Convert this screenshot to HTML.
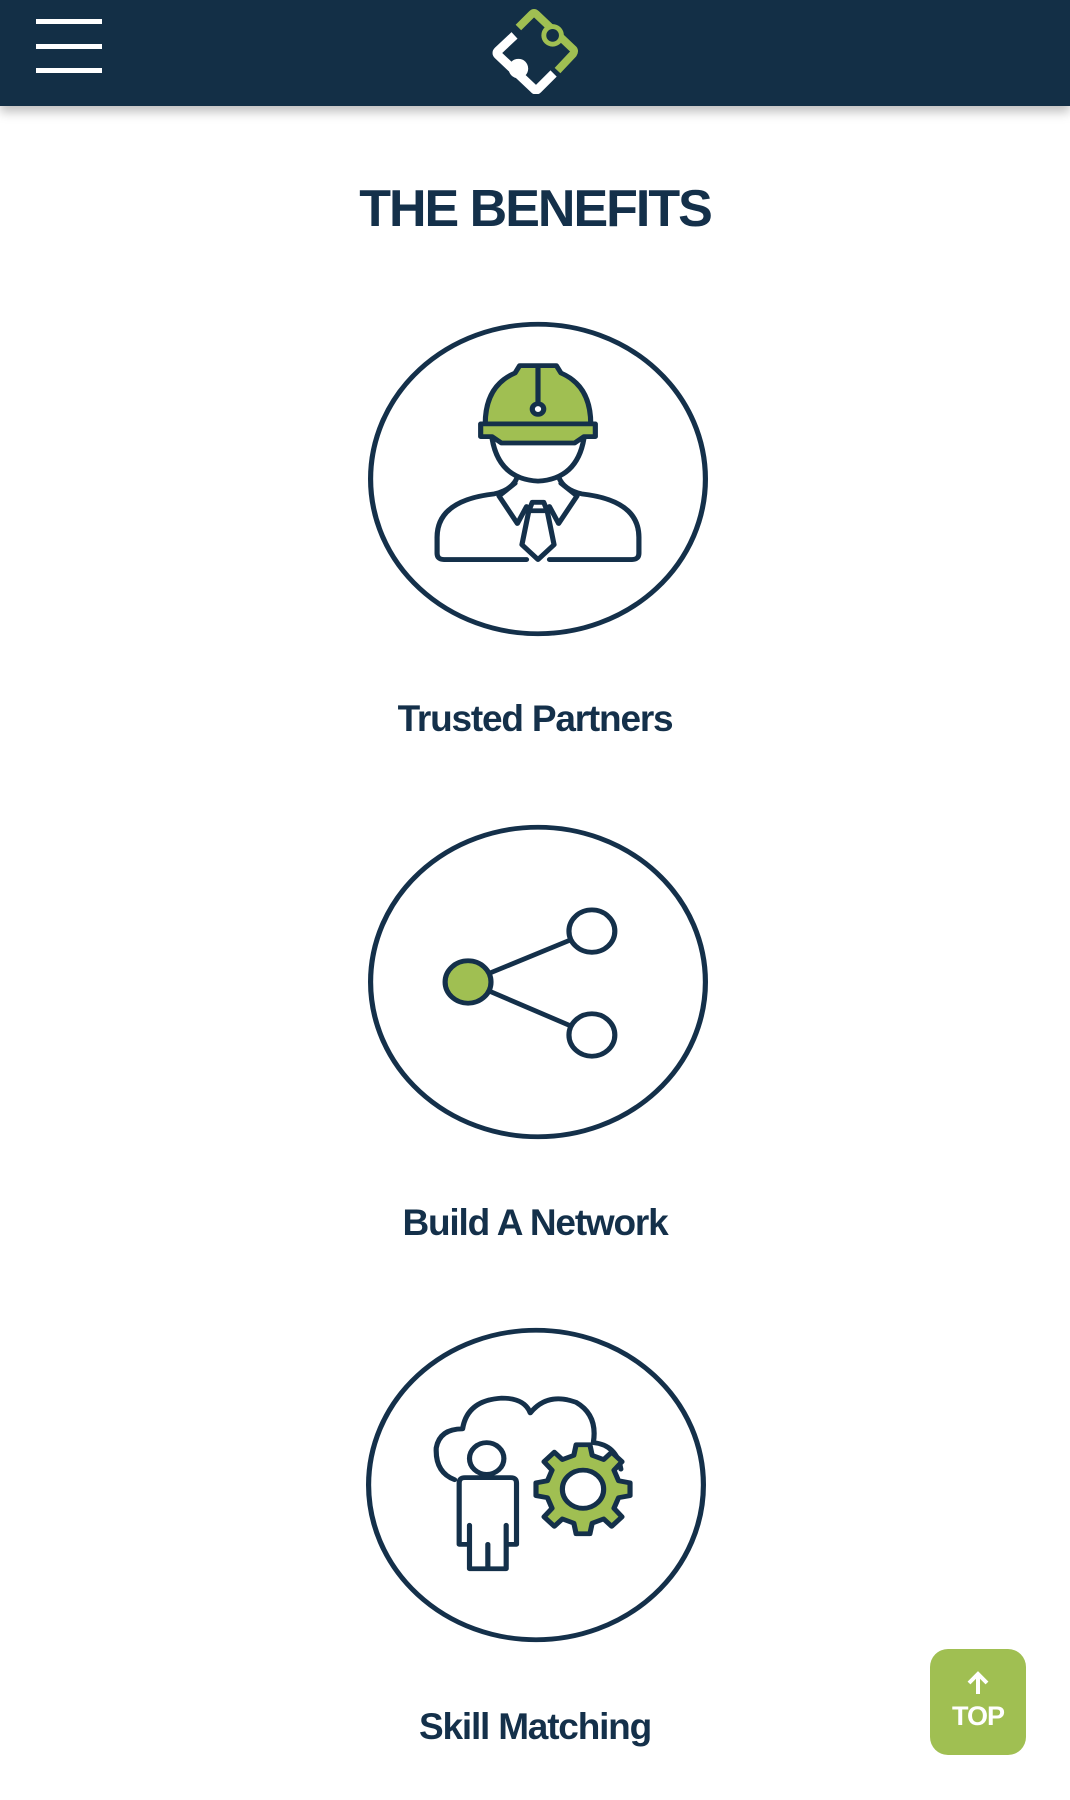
<!DOCTYPE html>
<html><head><meta charset="utf-8"><style>
html,body{margin:0;padding:0;background:#fff;width:1070px;height:1800px;overflow:hidden;font-family:"Liberation Sans",sans-serif;color:#14304a}
.hdr{position:absolute;left:0;top:0;width:1070px;height:106px;background:#132f46;box-shadow:0 6px 10px rgba(0,0,0,.25)}
.hb{position:absolute;left:36px;width:66px;height:5px;background:#fff}
h1{position:absolute;top:176px;left:0;width:1070px;text-align:center;margin:0;font-size:52px;font-weight:bold;letter-spacing:-2px;line-height:66px}
.lbl{position:absolute;left:0;width:1070px;text-align:center;font-size:37px;font-weight:bold;letter-spacing:-1.2px;line-height:46px}
.ic{position:absolute;width:344px;height:318px}
.top{position:absolute;left:930px;top:1649px;width:96px;height:106px;background:#a0bf52;border-radius:18px;color:#fff;text-align:center}
</style></head><body>
<div class="hdr">
<div class="hb" style="top:19px"></div><div class="hb" style="top:44px"></div><div class="hb" style="top:68px"></div>
<svg style="position:absolute;left:490px;top:8px" width="92" height="86" viewBox="0 0 92 88">
<path d="M28 20 L42 6 Q44 4 46 6 L84 42 Q86 44 84 47 L68 64" fill="none" stroke="#a0bf52" stroke-width="8" stroke-linejoin="round"/>
<circle cx="63" cy="28" r="9" fill="#132f46" stroke="#a0bf52" stroke-width="5"/>
<path d="M24 28 L7 44 Q5 46 7 48 L44 83 Q46 85 48 83 L64 67" fill="none" stroke="#fff" stroke-width="9" stroke-linejoin="round"/>
<circle cx="28" cy="62" r="10" fill="#fff"/>
</svg>
</div>
<h1>THE BENEFITS</h1>

<svg class="ic" style="left:366px;top:320px" viewBox="0 0 300 300" preserveAspectRatio="none">
<g fill="none" stroke="#14304a" stroke-width="4.5" stroke-linejoin="round" stroke-linecap="round">
<circle cx="150" cy="150" r="146"/>
<path d="M104 98 Q104 62 130 50 L134 43 H166 L170 50 Q196 62 196 98 Z" fill="#a0bf52"/>
<path d="M100 98 H200 V110 H190 L182 116 H118 L110 110 H100 Z" fill="#a0bf52"/>
<path d="M150 44 V80"/><circle cx="150" cy="84" r="5" fill="#fff"/>
<path d="M110 112 Q116 150 150 152 Q184 150 190 112"/>
<path d="M132 148 Q128 160 112 164 Q62 170 62 205 V220 Q62 226 68 226 H140"/>
<path d="M168 148 Q172 160 188 164 Q238 170 238 205 V220 Q238 226 232 226 H160"/>
<path d="M130 154 L116 166 L132 192 L140 176 M170 154 L184 166 L168 192 L160 176"/>
<path d="M145 172 H155 L158 180 L164 212 L150 226 L136 212 L142 180 Z M142 180 H158"/>
</g></svg>
<div class="lbl" style="top:696px">Trusted Partners</div>

<svg class="ic" style="left:366px;top:823px" viewBox="0 0 300 300" preserveAspectRatio="none">
<g fill="none" stroke="#14304a" stroke-width="4.5">
<circle cx="150" cy="150" r="146"/>
<path d="M89 150 L197 102 M89 150 L197 200"/>
<circle cx="89" cy="150" r="20" fill="#a0bf52"/>
<circle cx="197" cy="102" r="20" fill="#fff"/>
<circle cx="197" cy="200" r="20" fill="#fff"/>
</g></svg>
<div class="lbl" style="top:1200px">Build A Network</div>

<svg class="ic" style="left:364px;top:1326px" viewBox="0 0 300 300" preserveAspectRatio="none">
<g fill="none" stroke="#14304a" stroke-width="4.5" stroke-linejoin="round" stroke-linecap="round">
<circle cx="150" cy="150" r="146"/>
<path d="M79 145 Q62 138 63 115 Q66 97 86 97 Q90 70 120 68 Q140 68 145 82 Q160 62 185 72 Q204 84 200 110 Q220 112 224 135"/>
<circle cx="107" cy="125" r="15" fill="#fff"/>
<path d="M88 143 H128 Q133 143 133 148 V206 H124 M88 143 Q83 143 83 148 V206 H92 M92 188 V229 H124 V188 M108 206 V229"/>
<path d="M185 112 H197 L199 122 L209 126 L216 119 L225 128 L218 136 L222 146 L232 148 V160 L222 162 L218 172 L225 180 L216 189 L209 182 L199 186 L197 196 H185 L183 186 L173 182 L166 189 L157 180 L164 172 L160 162 L150 160 V148 L160 146 L164 136 L157 128 L166 119 L173 126 L183 122 Z" fill="#a0bf52"/>
<circle cx="191" cy="154" r="18" fill="#fff"/>
</g></svg>
<div class="lbl" style="top:1704px">Skill Matching</div>

<div class="top"><svg width="30" height="28" viewBox="0 0 30 28" style="margin-top:20px"><path d="M15 25 V5 M6 14 L15 5 L24 14" fill="none" stroke="#fff" stroke-width="4"/></svg><div style="font-size:27px;font-weight:bold;letter-spacing:-1px;line-height:28px">TOP</div></div>
</body></html>
